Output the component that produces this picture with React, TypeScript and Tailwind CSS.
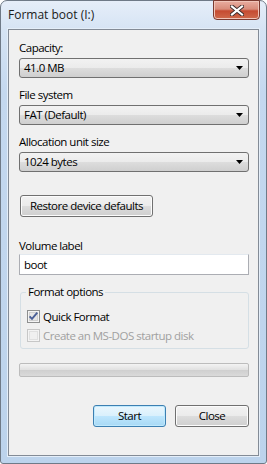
import React from "react";

const font = { fontFamily: '"Open Sans", "Noto Sans", sans-serif' };

function Arrow() {
  return (
    <svg width="7" height="4" viewBox="0 0 7 4" className="shrink-0">
      <path d="M0 0h7L3.5 4z" fill="#000" />
    </svg>
  );
}

function Combo({ value }: { value: string }) {
  return (
    <div className="flex h-[20px] items-center justify-between rounded-[3px] border border-[#707070] bg-[linear-gradient(#f2f2f2,#ebebeb_50%,#dddddd_50%,#cfcfcf)] pl-[4px] pr-[5px] leading-none text-black">
      <span>{value}</span>
      <Arrow />
    </div>
  );
}

function Btn({ label, primary, className = "" }: { label: string; primary?: boolean; className?: string }) {
  return (
    <div
      className={`flex h-[22px] items-center justify-center rounded-[3px] border leading-none text-black ${
        primary
          ? "border-[#3c7fb1] bg-[linear-gradient(#eaf6fd,#d9f0fc_50%,#bee6fd_50%,#a7d9f5)] shadow-[inset_0_0_0_1px_#bfe9fd]"
          : "border-[#707070] bg-[linear-gradient(#f2f2f2,#ebebeb_50%,#dddddd_50%,#cfcfcf)] shadow-[inset_0_0_0_1px_#fcfcfc]"
      } ${className}`}
    >
      {label}
    </div>
  );
}

function Check({ checked, disabled }: { checked?: boolean; disabled?: boolean }) {
  return (
    <svg width="13" height="13" viewBox="0 0 13 13" className="shrink-0">
      <rect x="0.5" y="0.5" width="12" height="12" fill="#f4f4f4" stroke={disabled ? "#c7c7c7" : "#8e8f8f"} />
      <rect x="2.5" y="2.5" width="8" height="8" fill={disabled ? "#f0f0f0" : "#e6e6e6"} stroke={disabled ? "#e0e0e0" : "#d0d0d0"} />
      {checked && <path d="M2.6 6.3l2.4 2.6 5.3-6.2" fill="none" stroke="#4a5f97" strokeWidth="1.9" />}
    </svg>
  );
}

export default function App() {
  return (
    <div className="h-[464px] w-[267px] overflow-hidden bg-white" style={font}>
      <div className="relative flex h-[464px] w-[267px] flex-col rounded-t-[7px] rounded-b-[3px] border border-[#6f7a87] bg-[linear-gradient(#e6eef9,#d6e4f4_6%,#c4d8ef_20%,#bcd3ec)]">
        {/* title bar */}
        <div className="flex h-[28px] shrink-0 items-start justify-between">
          <span className="ml-[7px] mt-[6px] text-[12px] leading-[15px] text-[#1b1b1b]">Format boot (I:)</span>
          <div className="mr-[6px] mt-[-1px] flex h-[20px] w-[47px] items-center justify-center rounded-b-[4px] border border-[#7b3a30] bg-[linear-gradient(#e9ada0,#d88c7b_45%,#c54b31_55%,#cf6a4c)] shadow-[inset_0_0_0_1px_#f0c4b8]">
            <svg width="14" height="11" viewBox="0 0 14 11">
              <path d="M2 1.5l10 8M12 1.5l-10 8" stroke="#3a2a2a" strokeWidth="4" strokeLinecap="square" />
              <path d="M2 1.5l10 8M12 1.5l-10 8" stroke="#fff" strokeWidth="2.2" strokeLinecap="square" />
            </svg>
          </div>
        </div>
        {/* client */}
        <div className="mx-[7px] mb-[7px] flex flex-1 flex-col border border-[#838b96] bg-[#f0f0f0] pl-[10px] pr-[9px] text-[11.5px] tracking-[-0.5px] text-black shadow-[0_0_0_1px_#e4eef9]">
          <div className="mt-[10px] leading-[15px]">Capacity:</div>
          <div className="mt-[3px]">
            <Combo value="41.0 MB" />
          </div>
          <div className="mt-[9px] leading-[15px]">File system</div>
          <div className="mt-[3px]">
            <Combo value="FAT (Default)" />
          </div>
          <div className="mt-[9px] leading-[15px]">Allocation unit size</div>
          <div className="mt-[3px]">
            <Combo value="1024 bytes" />
          </div>
          <Btn label="Restore device defaults" className="ml-[1px] mt-[23px] w-[133px]" />
          <div className="mt-[21px] leading-[15px]">Volume label</div>
          <div className="mt-[1px] flex h-[21px] items-center border border-[#abadb3] border-t-[#e3e9ef] bg-white pl-[4px] leading-none">boot</div>
          <div className="relative ml-[1px] mt-[17px] h-[57px] rounded-[3px] border border-[#d5dfe5]">
            <span className="absolute left-[5px] top-[-9px] bg-[#f0f0f0] px-[2px] leading-[15px]">Format options</span>
            <div className="ml-[6px] mt-[16px] flex items-center gap-[3px] leading-[15px]">
              <Check checked />
              <span>Quick Format</span>
            </div>
            <div className="ml-[6px] mt-[4px] flex items-center gap-[3px] leading-[15px] text-[#a0a0a0]">
              <Check disabled />
              <span>Create an MS-DOS startup disk</span>
            </div>
          </div>
          <div className="mt-[14px] h-[14px] rounded-[2px] border border-[#bcbcbc] bg-[linear-gradient(#f3f3f3,#e0e0e0_50%,#cfcfcf_50%,#dadada)]" />
          <div className="mt-[28px] flex justify-end gap-[9px]">
            <Btn label="Start" primary className="w-[73px]" />
            <Btn label="Close" className="w-[74px]" />
          </div>
        </div>
      </div>
    </div>
  );
}
